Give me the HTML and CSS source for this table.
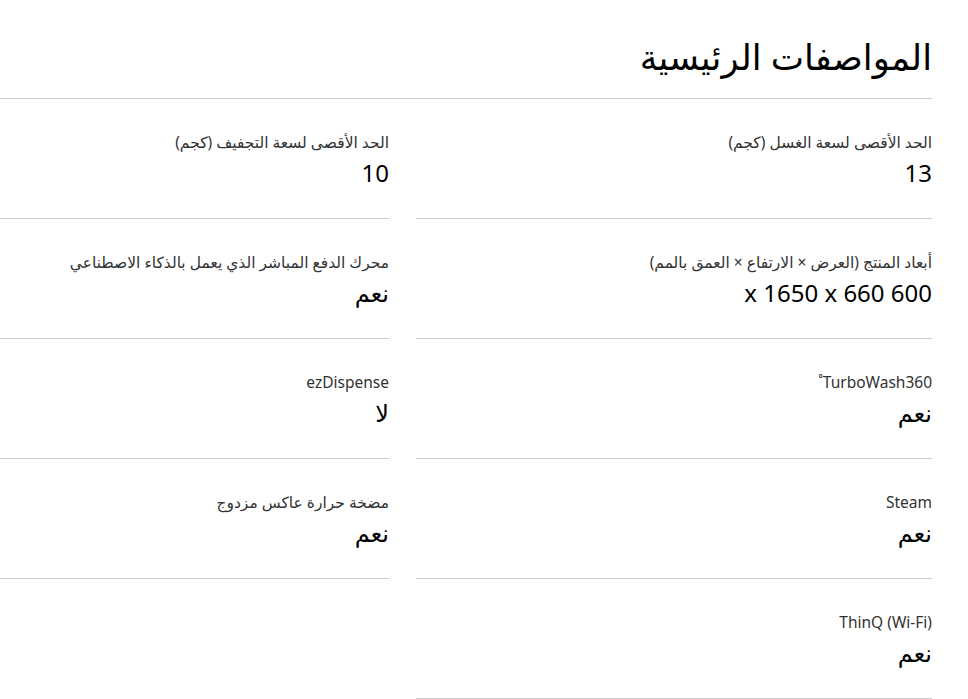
FILE: index.html
```html
<!DOCTYPE html>
<html lang="ar" dir="rtl">
<head>
<meta charset="utf-8">
<title>المواصفات الرئيسية</title>
<link rel="stylesheet" href="styles.css">
</head>
<body>
<section class="specs">
  <h2 class="specs-title">المواصفات الرئيسية</h2>
  <div class="specs-grid">
    <div class="spec">
      <div class="spec-label">الحد الأقصى لسعة الغسل (كجم)</div>
      <div class="spec-value">13</div>
    </div>
    <div class="spec">
      <div class="spec-label">الحد الأقصى لسعة التجفيف (كجم)</div>
      <div class="spec-value">10</div>
    </div>
    <div class="spec">
      <div class="spec-label">أبعاد المنتج (العرض × الارتفاع × العمق بالمم)</div>
      <div class="spec-value">x 1650 x 660 600</div>
    </div>
    <div class="spec">
      <div class="spec-label">محرك الدفع المباشر الذي يعمل بالذكاء الاصطناعي</div>
      <div class="spec-value">نعم</div>
    </div>
    <div class="spec">
      <div class="spec-label">TurboWash360˚</div>
      <div class="spec-value">نعم</div>
    </div>
    <div class="spec">
      <div class="spec-label">ezDispense</div>
      <div class="spec-value">لا</div>
    </div>
    <div class="spec">
      <div class="spec-label">Steam</div>
      <div class="spec-value">نعم</div>
    </div>
    <div class="spec">
      <div class="spec-label">مضخة حرارة عاكس مزدوج</div>
      <div class="spec-value">نعم</div>
    </div>
    <div class="spec">
      <div class="spec-label"><bdi dir="ltr">ThinQ (Wi-Fi)</bdi></div>
      <div class="spec-value">نعم</div>
    </div>
  </div>
</section>
</body>
</html>
```
FILE: styles.css
```css
html, body {
  margin: 0;
  padding: 0;
  background: #fff;
}
body {
  font-family: "Noto Sans", "Open Sans", "DejaVu Sans", sans-serif;
  color: #000;
  overflow: hidden;
}
.specs {
  margin-right: 36px;
}
.specs-title {
  margin: 0;
  padding-top: 31px;
  padding-bottom: 17px;
  font-size: 35.4px;
  font-weight: 400;
  line-height: 50px;
  border-bottom: 1px solid #cbcbcb;
}
.specs-grid {
  display: grid;
  grid-template-columns: 516px 389px;
  column-gap: 27px;
}
.spec {
  height: 119px;
  border-bottom: 1px solid #cbcbcb;
  display: flex;
  flex-direction: column;
}
.spec-label {
  margin-top: 32px;
  font-size: 15.5px;
  line-height: 22px;
  color: #333;
}
.spec-value {
  margin-top: 4px;
  font-size: 24px;
  line-height: 32px;
  color: #000;
}
```
